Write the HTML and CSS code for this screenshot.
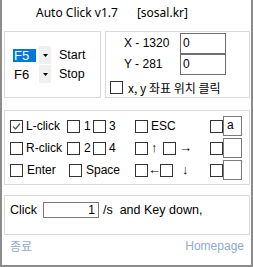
FILE: index.html
```html
<!DOCTYPE html>
<html>
<head>
<meta charset="utf-8">
<link rel="stylesheet" href="styles.css">
</head>
<body>
<div class="win">
  <div class="title"><span>Auto Click v1.7</span><span class="site">[sosal.kr]</span></div>
  <div class="top">
    <div class="group g1">
      <div class="krow">
        <div class="combo"><span class="field"><span class="sel">F5</span></span><span class="btn"><svg width="5" height="3" viewBox="0 0 5 3"><polygon points="0,0 5,0 2.5,3" fill="#000"/></svg></span></div>
        <span class="klabel">Start</span>
      </div>
      <div class="krow">
        <div class="combo"><span class="field"><span class="plain">F6</span></span><span class="btn"><svg width="5" height="3" viewBox="0 0 5 3"><polygon points="0,0 5,0 2.5,3" fill="#000"/></svg></span></div>
        <span class="klabel">Stop</span>
      </div>
    </div>
    <div class="group g2">
      <div class="coords">
        <span class="clabel">X - 1320</span><span class="inp">0</span>
        <span class="clabel">Y - 281</span><span class="inp">0</span>
      </div>
      <div class="xyrow"><span class="cb"></span><span class="kr">x, y 좌표 위치 클릭</span></div>
    </div>
  </div>

  <div class="group g3">
    <div class="row r1">
      <span class="cb on"><svg width="11" height="11" viewBox="0 0 11 11"><polyline points="2,5.5 4.5,8 9,2.5" fill="none" stroke="#555" stroke-width="1.2"/></svg></span><span class="t p3">L-click</span>
      <span class="cb"></span><span class="t p4">1</span>
      <span class="cb"></span><span class="t p3">3</span>
      <span class="cb"></span><span class="t p3">ESC</span>
      <span class="cb"></span><span class="box">a</span>
    </div>
    <div class="row r2">
      <span class="cb"></span><span class="t p3">R-click</span>
      <span class="cb"></span><span class="t p4">2</span>
      <span class="cb"></span><span class="t p3">4</span>
      <span class="cb"></span><span class="t p3 ar">↑</span>
      <span class="cb"></span><span class="t p3 ar">→</span>
      <span class="cb"></span><span class="box"></span>
    </div>
    <div class="row r3">
      <span class="cb"></span><span class="t p4">Enter</span>
      <span class="cb"></span><span class="t p4">Space</span>
      <span class="cb"></span><span class="t p0 ar">←</span>
      <span class="cb"></span><span class="t p9 ar">↓</span>
      <span class="cb"></span><span class="box"></span>
    </div>
  </div>

  <div class="group g4">
    <span class="clk">Click</span><span class="rate">1</span><span class="tail">/s  and Key down,</span>
  </div>

  <div class="footer"><span class="kr">종료</span><span>Homepage</span></div>
</div>
</body>
</html>
```
FILE: styles.css
```css
* { box-sizing: border-box; }
html, body { margin: 0; padding: 0; background: #fff; }
body {
  font-family: "Liberation Sans", Arial, "Noto Sans CJK KR", sans-serif;
  font-size: 12px;
  color: #000;
}
.win {
  width: 253px;
  height: 267px;
  border: 2px solid #8c8c8c;
  border-top: none;
  padding: 0 1px 0 2px;
}
.title {
  height: 31px;
  padding: 4px 0 0 32px;
  font-family: "Noto Sans", sans-serif;
  font-size: 12px;
  line-height: 17px;
  white-space: pre;
}
.title .site { margin-left: 19px; }
.top { display: flex; gap: 4px; }
.group { border: 1px solid #dadada; }
.g1 {
  width: 97px;
  height: 67px;
  padding: 14px 0 0 7px;
  display: flex;
  flex-direction: column;
  gap: 1px;
}
.krow { display: flex; align-items: center; height: 18px; }
.combo { display: flex; width: 39px; height: 18px; }
.field { width: 27px; height: 18px; padding: 3px 0 0 1px; }
.sel {
  display: block;
  width: 23px;
  height: 13px;
  background: #0078d7;
  color: #fff;
  padding-left: 1px;
  line-height: 13px;
  font-size: 13px;
}
.plain { display: block; padding-left: 1px; line-height: 13px; font-size: 13px; }
.btn {
  width: 12px;
  height: 18px;
  background: #f0f0f0;
  display: flex;
  align-items: center;
  justify-content: center;
}
.klabel { margin-left: 8px; font-size: 12.5px; }
.g2 {
  width: 145px;
  height: 67px;
  padding: 1px 0 0 4px;
}
.coords {
  display: grid;
  grid-template-columns: 56px 46px;
  grid-auto-rows: 21px;
  margin-left: 14px;
}
.clabel { line-height: 21px; }
.inp {
  border: 1px solid #6e6e6e;
  padding-left: 2px;
  line-height: 19px;
}
.xyrow { display: flex; align-items: center; margin-top: 6px; gap: 5px; height: 13px; }
.kr { font-family: "Noto Sans CJK KR", "Liberation Sans", sans-serif; font-size: 12px; }
.cb {
  width: 13px;
  height: 13px;
  border: 1px solid #333;
  background: #fff;
  display: flex;
  align-items: center;
  justify-content: center;
}
.g3 {
  margin-top: 12px;
  height: 75px;
  padding: 5px 0 0 5px;
  display: flex;
  flex-direction: column;
  gap: 2px;
}
.row { display: grid; height: 20px; align-items: center; }
.r1 { grid-template-columns: 13px 44px 13px 13px 13px 29px 13px 62px 13px 19px; }
.r2 { grid-template-columns: 13px 44px 13px 13px 13px 29px 13px 15px 13px 34px 13px 19px; }
.r3 { grid-template-columns: 13px 46px 13px 53px 13px 12px 13px 37px 13px 19px; }
.t { white-space: nowrap; line-height: 14px; }
.p0 { padding-left: 0; }
.p3 { padding-left: 3px; }
.p4 { padding-left: 4px; }
.p9 { padding-left: 9px; }
.ar { font-family: "Liberation Sans", "Noto Sans CJK KR", sans-serif; font-size: 13px; color: #000; }
.box {
  width: 19px;
  height: 20px;
  border: 1px solid #7a7a7a;
  padding-left: 3px;
  line-height: 17px;
}
.g4 {
  margin-top: 10px;
  height: 40px;
  padding: 6px 0 0 5px;
  display: flex;
  align-items: flex-start;
}
.clk { width: 33px; line-height: 16px; font-size: 12.5px; }
.rate {
  width: 56px;
  height: 16px;
  border: 1px solid #7a7a7a;
  text-align: right;
  padding-right: 3px;
  line-height: 14px;
}
.tail { margin-left: 4px; white-space: pre; line-height: 16px; font-size: 12.5px; }
.footer {
  display: flex;
  justify-content: space-between;
  padding: 4px 6px 0 6px;
  color: #8eaad0;
  font-size: 12px;
  line-height: 14px;
}
```
